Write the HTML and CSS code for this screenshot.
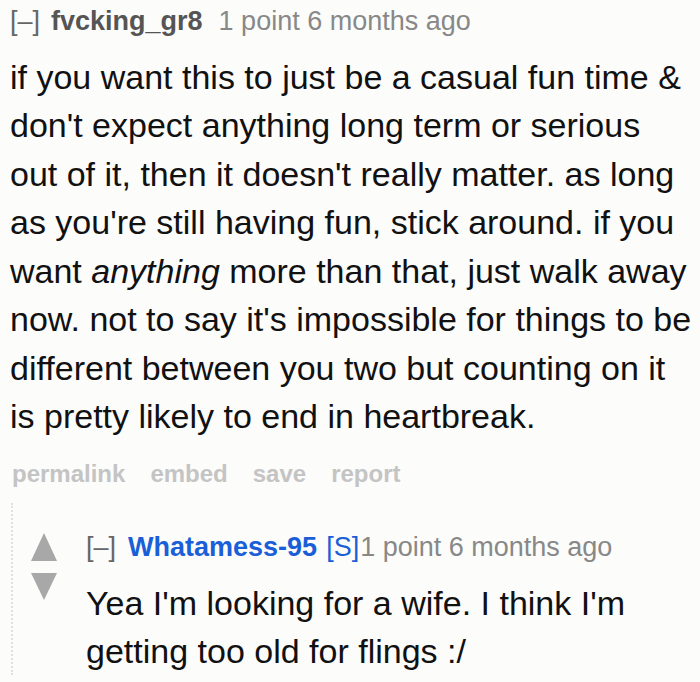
FILE: index.html
```html
<!DOCTYPE html>
<html>
<head>
<meta charset="utf-8">
<link rel="stylesheet" href="styles.css">
</head>
<body>
<div class="comment">
  <div class="tagline"><span class="expand">[–]</span><span class="author">fvcking_gr8</span><span class="meta">1 point 6 months ago</span></div>
  <div class="body">
    <p>if you want this to just be a casual fun time &amp; don't expect anything long term or serious out of it, then it doesn't really matter. as long as you're still having fun, stick around. if you want <em>anything</em> more than that, just walk away now. not to say it's impossible for things to be different between you two but counting on it is pretty likely to end in heartbreak.</p>
  </div>
  <ul class="buttons">
    <li>permalink</li>
    <li>embed</li>
    <li>save</li>
    <li>report</li>
  </ul>
  <div class="child">
    <div class="reply">
      <div class="votes">
        <span class="arrow up"></span>
        <span class="arrow down"></span>
      </div>
      <div class="entry">
        <div class="tagline"><span class="expand">[–]</span><span class="author op">Whatamess-95</span><span class="submitter">[S]</span><span class="meta">1 point 6 months ago</span></div>
        <div class="body">
          <p>Yea I'm looking for a wife. I think I'm getting too old for flings :/</p>
        </div>
      </div>
    </div>
  </div>
</div>
</body>
</html>
```

FILE: styles.css
```css
html, body {
  margin: 0;
  padding: 0;
  background: #fcfcfb;
}
body {
  font-family: "Liberation Sans", Arial, sans-serif;
  width: 700px;
  height: 682px;
  overflow: hidden;
}
.comment {
  padding: 3px 0 0 10px;
}
.tagline {
  font-size: 27px;
  line-height: 36px;
  color: #888;
  white-space: nowrap;
}
.expand {
  color: #666;
  margin-right: 11px;
}
.author {
  font-weight: bold;
  color: #555;
  margin-right: 16px;
}
.author.op {
  color: #1a5ed8;
  margin-left: 1px;
  margin-right: 9px;
}
.submitter {
  color: #1a5ed8;
  margin-right: 1px;
}
.body p {
  margin: 0;
  font-size: 34px;
  line-height: 48.5px;
  color: #111;
}
.comment > .body {
  margin-top: 13.5px;
  width: 684px;
}
.buttons {
  list-style: none;
  margin: 18.5px 0 0 2px;
  padding: 0;
  display: flex;
  gap: 25px;
  font-size: 24px;
  line-height: 30px;
  font-weight: bold;
  color: #c4c4c4;
}
.child {
  margin-top: 14px;
  margin-left: 1px;
  border-left: 2px dotted #e0e0e0;
  padding-left: 18px;
  padding-top: 26px;
}
.reply {
  display: flex;
  gap: 29px;
}
.votes {
  display: flex;
  flex-direction: column;
  gap: 12px;
  padding-top: 4px;
}
.arrow {
  width: 0;
  height: 0;
  border-left: 13px solid transparent;
  border-right: 13px solid transparent;
}
.arrow.up {
  border-bottom: 28px solid #a8a8a8;
}
.arrow.down {
  border-top: 27px solid #a8a8a8;
}
.entry .body {
  margin-top: 13.5px;
}
.entry .body p {
  width: 590px;
  line-height: 48px;
}
```
